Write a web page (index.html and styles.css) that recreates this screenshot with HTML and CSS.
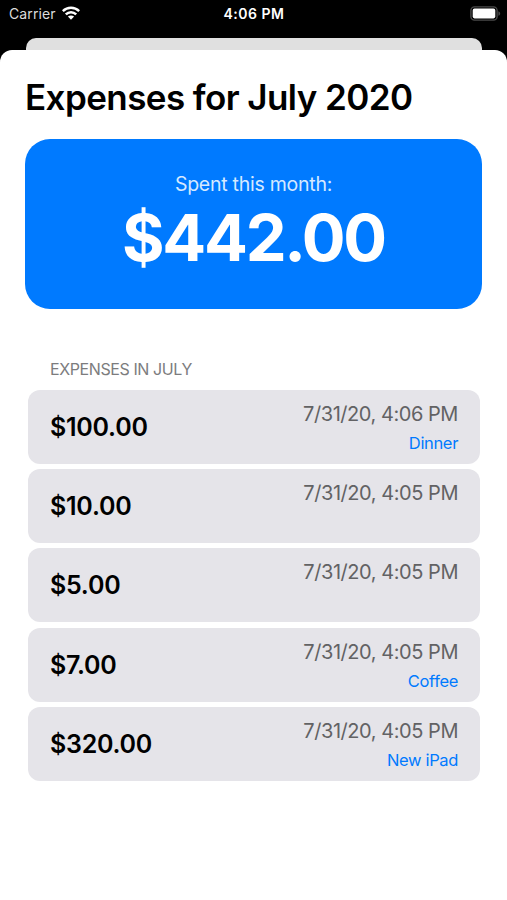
FILE: index.html
```html
<!DOCTYPE html>
<html lang="en">
<head>
    <meta charset="UTF-8">
    <meta name="viewport" content="width=device-width, initial-scale=1.0">
    <title>Expenses</title>
    <link rel="stylesheet" href="styles.css">
</head>
<body>
    <header class="status-bar">
        <div class="carrier">
            <span>Carrier</span>
            <svg class="wifi" viewBox="0 0 18 14" width="18" height="14">
                <g fill="none" stroke="#fff" stroke-width="2.5">
                    <path d="M0.8 5.1C5.4 0.6 12.6 0.6 17.2 5.1"/>
                    <path d="M3.8 8.4C6.8 5.5 11.2 5.5 14.2 8.4"/>
                </g>
                <path d="M5.9 10.6C7.7 9 10.3 9 12.1 10.6L9 13.8Z" fill="#fff"/>
            </svg>
        </div>
        <span class="time">4:06 PM</span>
        <svg class="battery" viewBox="0 0 31 15" width="31" height="15">
            <rect x="0.9" y="0.9" width="26.2" height="13.2" rx="3.6" fill="none" stroke="#4a4a4a" stroke-width="1.4"/>
            <rect x="2.7" y="2.6" width="22.6" height="9.8" rx="1.8" fill="#fff"/>
            <path d="M28.4 5.2C30.8 6.2 30.8 8.8 28.4 9.8Z" fill="#4a4a4a"/>
        </svg>
    </header>

    <div class="back-sheet"></div>
    <main class="sheet">
        <h1>Expenses for July 2020</h1>

        <section class="summary">
            <span class="summary-label">Spent this month:</span>
            <span class="summary-total">$442.00</span>
        </section>

        <h2>EXPENSES IN JULY</h2>
        <ul class="expenses">
            <li class="expense">
                <span class="amount">$100.00</span>
                <div class="details">
                    <span class="date">7/31/20, 4:06 PM</span>
                    <span class="note">Dinner</span>
                </div>
            </li>
            <li class="expense">
                <span class="amount">$10.00</span>
                <div class="details">
                    <span class="date">7/31/20, 4:05 PM</span>
                </div>
            </li>
            <li class="expense">
                <span class="amount">$5.00</span>
                <div class="details">
                    <span class="date">7/31/20, 4:05 PM</span>
                </div>
            </li>
            <li class="expense">
                <span class="amount">$7.00</span>
                <div class="details">
                    <span class="date">7/31/20, 4:05 PM</span>
                    <span class="note">Coffee</span>
                </div>
            </li>
            <li class="expense">
                <span class="amount">$320.00</span>
                <div class="details">
                    <span class="date">7/31/20, 4:05 PM</span>
                    <span class="note">New iPad</span>
                </div>
            </li>
        </ul>
    </main>
</body>
</html>
```

FILE: styles.css
```css
:root {
    --blue: #007aff;
    --row-bg: #e5e4e9;
    --back-sheet: #e0e0e0;
    --date-color: #626264;
    --header-color: #7c7c7e;
}

* {
    box-sizing: border-box;
}

body {
    margin: 0;
    height: 900px;
    display: flex;
    flex-direction: column;
    overflow: hidden;
    background-color: #000;
    color: #000;
    font-family: Inter, "Liberation Sans", sans-serif;
}

.status-bar {
    display: grid;
    grid-template-columns: 1fr auto 1fr;
    align-items: center;
    height: 28px;
    margin-bottom: 10px;
    padding: 0 6px 0 9px;
    color: #fff;
    font-size: 14px;
    line-height: 28px;
}

.carrier {
    display: flex;
    align-items: center;
    gap: 6px;
    color: #dcdcdc;
    letter-spacing: 0.1px;
}

.wifi {
    margin-top: -2px;
}

.time {
    margin-left: -2px;
    font-weight: 600;
    font-size: 14px;
    letter-spacing: 0.5px;
}

.battery {
    justify-self: end;
    margin-top: -2px;
}

.back-sheet {
    height: 12px;
    margin: 0 25px 0 26px;
    background-color: var(--back-sheet);
    border-radius: 10px 10px 0 0;
}

.sheet {
    flex: 1;
    padding: 25px 25px 0;
    background-color: #fff;
    border-radius: 12px 12px 0 0;
}

h1 {
    margin: 0 0 19.5px;
    font-size: 35px;
    font-weight: 600;
    line-height: 44px;
    letter-spacing: -0.58px;
    white-space: nowrap;
}

.summary {
    display: flex;
    flex-direction: column;
    align-items: center;
    height: 170.5px;
    padding-top: 33.5px;
    background-color: var(--blue);
    border-radius: 25px;
    color: #fff;
}

.summary-label {
    color: #d5e9ff;
    font-size: 19.5px;
    line-height: 24px;
    letter-spacing: -0.25px;
}

.summary-total {
    font-size: 65px;
    font-weight: 700;
    line-height: 84px;
    letter-spacing: -2.3px;
}

h2 {
    margin: 49.5px 0 11px 25px;
    color: var(--header-color);
    font-size: 16px;
    font-weight: 400;
    line-height: 20px;
    letter-spacing: -0.4px;
}

.expenses {
    display: flex;
    flex-direction: column;
    gap: 5.4px;
    margin: 0;
    padding: 0 2px 0 3px;
    list-style: none;
}

.expense {
    display: flex;
    align-items: center;
    justify-content: space-between;
    height: 74px;
    padding: 0 22px;
    background-color: var(--row-bg);
    border-radius: 12px;
}

.amount {
    font-size: 25px;
    font-weight: 600;
    letter-spacing: -0.25px;
}

.details {
    display: flex;
    flex-direction: column;
    align-items: flex-end;
    align-self: stretch;
    padding-top: 10px;
}

.date {
    color: var(--date-color);
    font-size: 20px;
    line-height: 28px;
    letter-spacing: -0.45px;
}

.note {
    color: var(--blue);
    font-size: 16.5px;
    line-height: 30px;
    letter-spacing: -0.35px;
}
```
